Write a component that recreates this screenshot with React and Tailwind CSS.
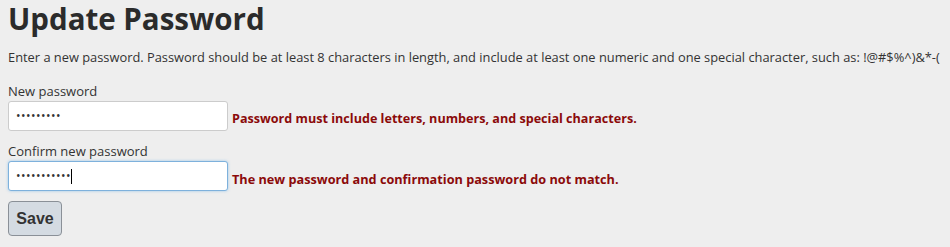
export default function App() {
  return (
    <div className="min-h-[247px] w-[950px] bg-[#eeeeee] px-2 text-[#333333]" style={{ fontFamily: '"Open Sans", "Noto Sans", sans-serif' }}>
      <h1 className="pt-0 text-[29.5px] font-bold leading-[38px] text-[#2b2b2b]">Update Password</h1>
      <p className="mt-[10px] whitespace-nowrap text-[12.85px] leading-[18px]">
        Enter a new password. Password should be at least 8 characters in length, and include at least one numeric and one special character, such as: !@#$%^)&amp;*-(
      </p>
      <div className="mt-[16px] flex flex-col">
        <label className="text-[13px] leading-[18px]">New password</label>
        <div className="mt-[1px] flex items-end">
          <div className="flex h-[30px] w-[220px] items-center rounded-[3px] border border-[#cccccc] bg-white px-[7px]">
            <span className="text-[12px] leading-none tracking-[0.5px] text-[#333]">•••••••••</span>
          </div>
          <span className="mb-[3px] ml-[4px] text-[12.6px] font-bold leading-[18px] text-[#8b0a0a]">Password must include letters, numbers, and special characters.</span>
        </div>
        <label className="mt-[11px] text-[13px] leading-[18px]">Confirm new password</label>
        <div className="mt-[1px] flex items-end">
          <div className="flex h-[30px] w-[220px] items-center rounded-[3px] border border-[#7eb1dc] bg-white px-[7px] shadow-[0_0_3px_rgba(102,175,233,0.6)]">
            <span className="text-[12px] leading-none tracking-[0.5px] text-[#333]">•••••••••••</span>
            <span className="inline-block h-[15px] w-[1px] bg-black" />
          </div>
          <span className="mb-[3px] ml-[4px] text-[12.7px] font-bold leading-[18px] text-[#8b0a0a]">The new password and confirmation password do not match.</span>
        </div>
        <div className="mt-[10px]">
          <button className="h-[35px] w-[54px] rounded-[4px] border border-[#8a9097] bg-[#d4dbe2] text-[16px] font-bold text-[#333]" style={{ fontFamily: '"Liberation Sans", Arial, sans-serif' }}>Save</button>
        </div>
      </div>
    </div>
  );
}
